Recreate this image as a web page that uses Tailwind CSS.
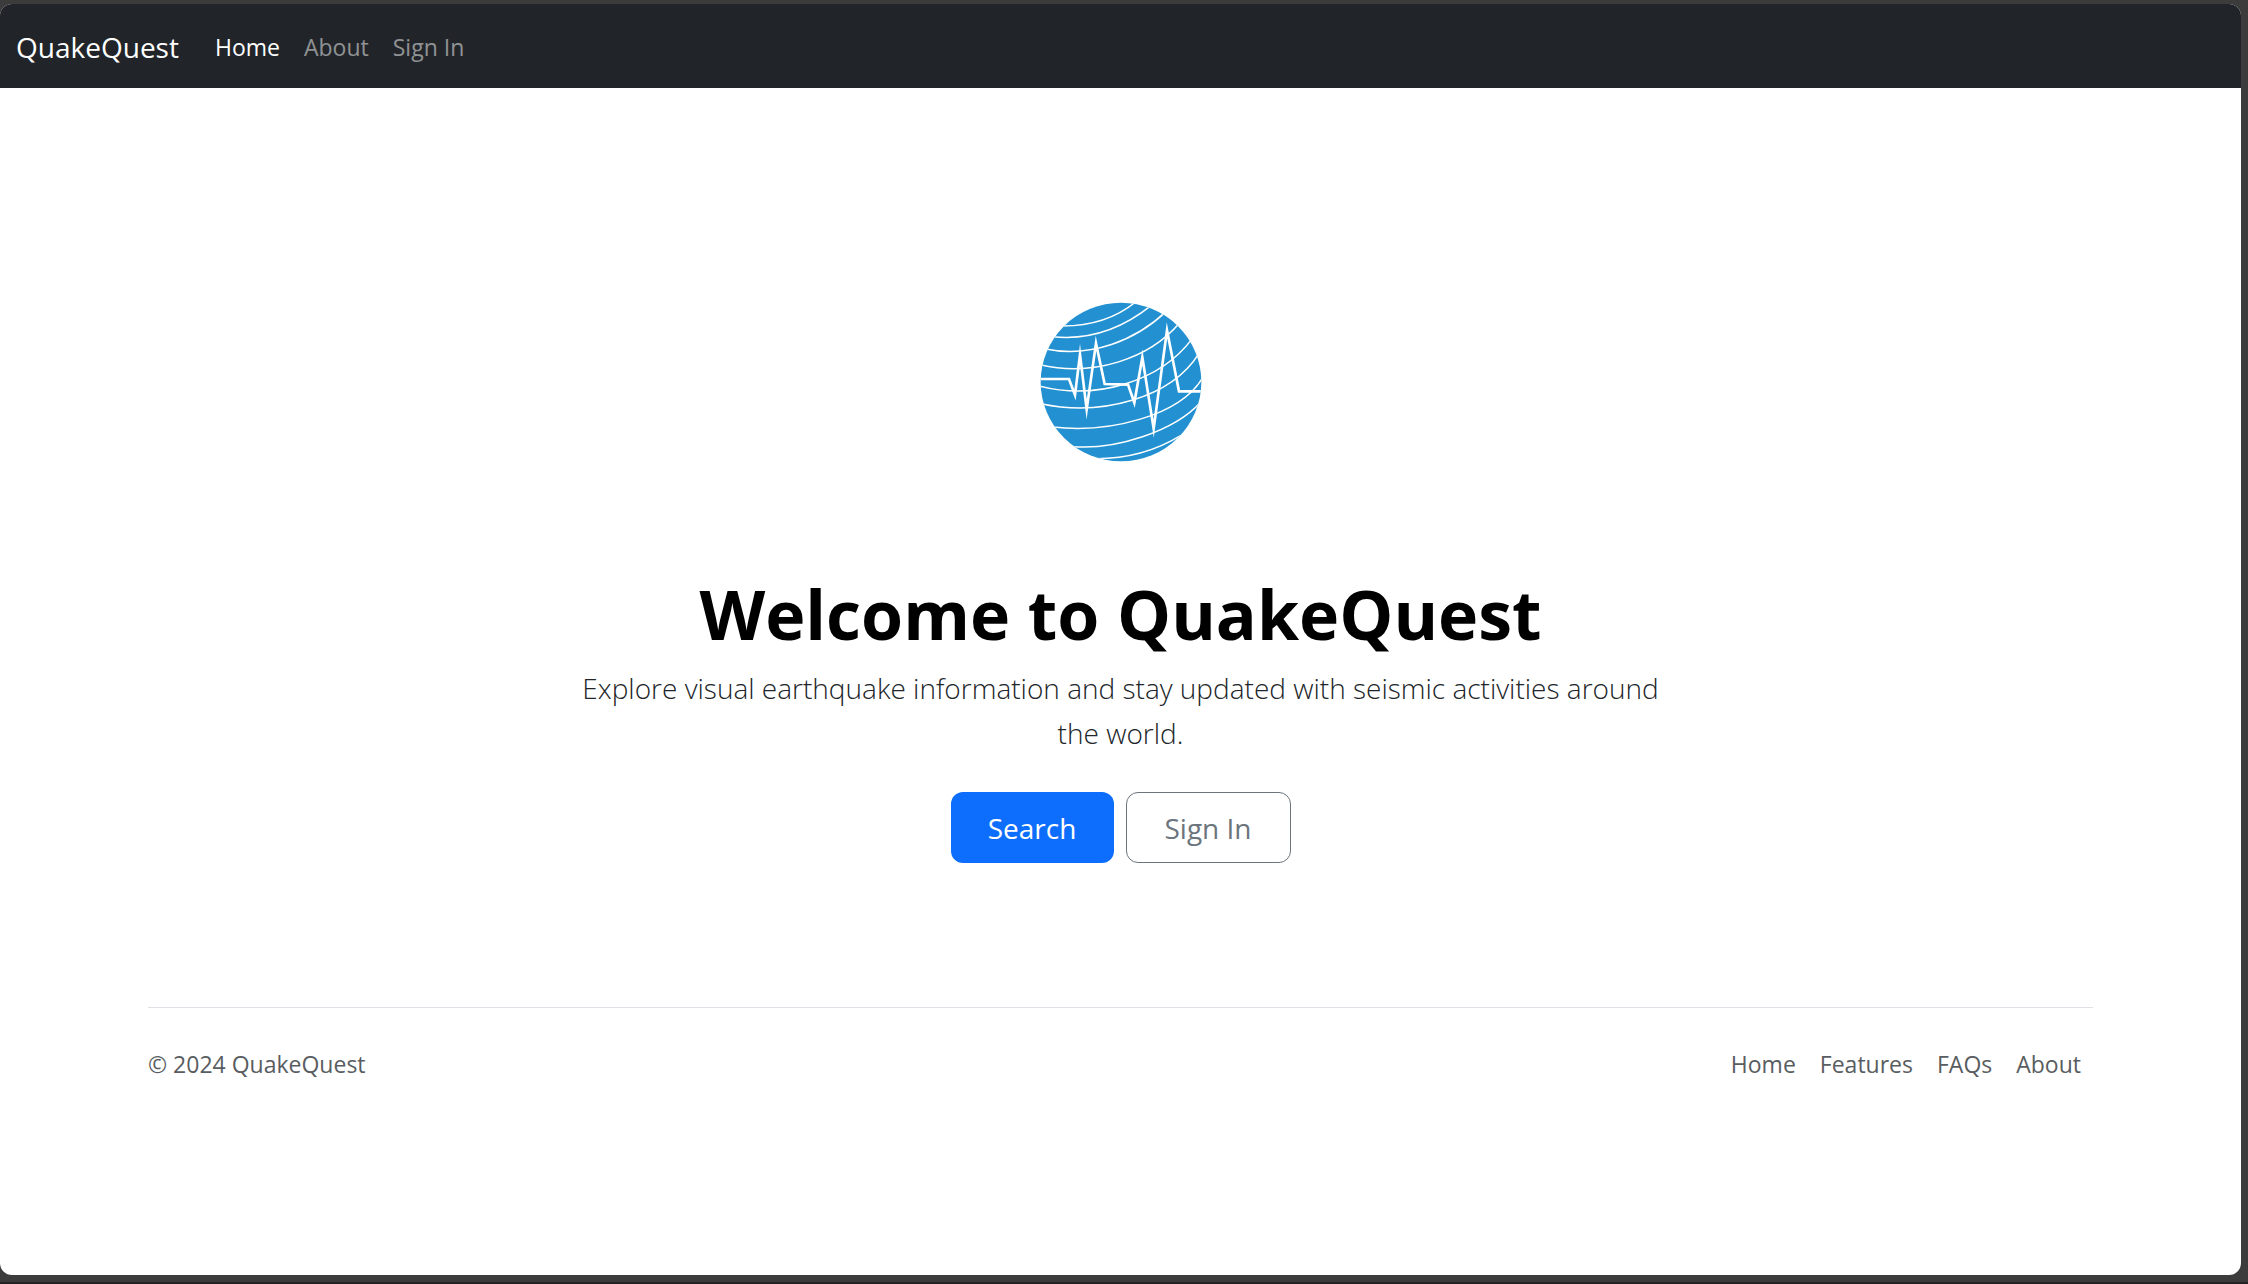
<!DOCTYPE html>
<html lang="en">
<head>
<meta charset="utf-8">
<meta name="viewport" content="width=device-width, initial-scale=1">
<title>QuakeQuest</title>
<script src="https://cdn.jsdelivr.net/npm/@tailwindcss/browser@4"></script>
</head>
<body class="flex h-screen flex-col border-b-2 border-[#252324] bg-[#3c3c3c] pt-1 pr-[7px] pb-[7px] font-['Segoe_UI','Open_Sans',sans-serif] text-[23px] leading-9 text-[#212529]">
<div class="flex grow flex-col overflow-hidden rounded-xl bg-white">
  <nav class="flex h-[84px] shrink-0 items-center bg-[#212529] px-4 pt-[2px]">
    <a href="#" class="mr-9 text-[28px] text-white">QuakeQuest</a>
    <ul class="flex gap-6">
      <li><a href="#" class="text-white">Home</a></li>
      <li><a href="#" class="text-white/50">About</a></li>
      <li><a href="#" class="text-white/50">Sign In</a></li>
    </ul>
  </nav>
  <main class="flex flex-col items-center px-6 pt-[202px] text-center">
    <svg class="h-[190px] w-[200px]" viewBox="0 0 600 570" fill="none" stroke="#fff" role="img" aria-label="QuakeQuest logo">
      <clipPath id="globe"><ellipse cx="300" cy="276" rx="241" ry="238"/></clipPath>
      <g clip-path="url(#globe)">
        <rect width="600" height="570" fill="#2391d1" stroke="none"/>
        <g stroke-width="4.5">
          <path d="M120 108C210 109 285 84 344 36"/>
          <path d="M95 140C210 152 305 115 390 47"/>
          <path d="M70 176C210 206 345 150 435 65"/>
          <path d="M55 224C220 262 385 205 475 100"/>
          <path d="M50 287C230 335 420 270 512 148"/>
          <path d="M60 341C240 380 450 325 534 190"/>
          <path d="M95 411C260 430 480 380 548 258"/>
          <path d="M155 470C280 480 460 425 540 335"/>
          <path d="M225 506C320 506 400 485 480 436"/>
        </g>
        <path stroke-width="8" stroke-miterlimit="20" d="M55 267H144L162 315L177 194L197 358L225 160L251 282L321 284L340 338L364 202L398 416L438 121L474 304H545"/>
      </g>
    </svg>
    <h1 class="mt-[91px] text-[68px] leading-[86px] font-bold text-black">Welcome to QuakeQuest</h1>
    <p class="mt-[9px] max-w-[1104px] text-[28px] leading-[45px] font-light">Explore visual earthquake information and stay updated with seismic activities around the world.</p>
    <div class="mt-9 flex gap-3 text-[28px]">
      <button type="button" class="h-[71px] w-[163px] rounded-xl bg-[#0d6efd] text-white">Search</button>
      <button type="button" class="h-[71px] w-[165px] rounded-xl border border-[#6c757d] text-[#6c757d]">Sign In</button>
    </div>
  </main>
  <footer class="mx-[148px] mt-36 flex items-center justify-between border-t border-[#dee2e6] pt-[38px] text-[#595d61]">
    <p>© 2024 QuakeQuest</p>
    <ul class="flex gap-6 pr-3">
      <li><a href="#">Home</a></li>
      <li><a href="#">Features</a></li>
      <li><a href="#">FAQs</a></li>
      <li><a href="#">About</a></li>
    </ul>
  </footer>
</div>
</body>
</html>
